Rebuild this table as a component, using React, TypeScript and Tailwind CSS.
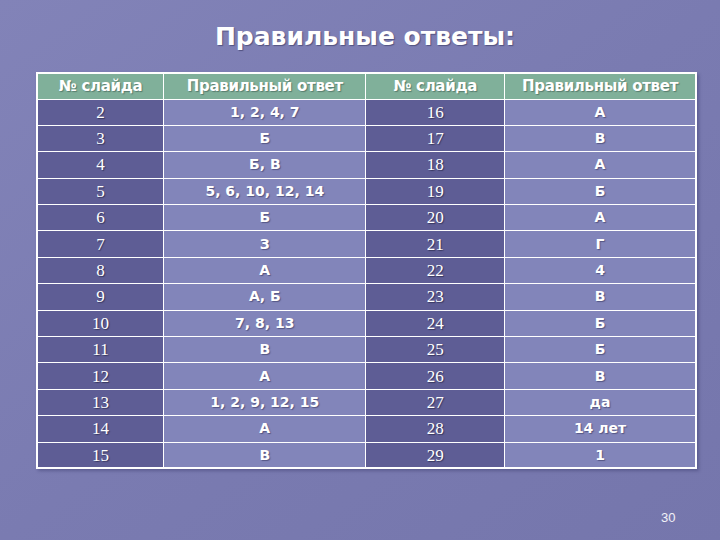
import React from 'react'

const rows: [string, string, string, string][] = [
  ['2', '1, 2, 4, 7', '16', 'А'],
  ['3', 'Б', '17', 'В'],
  ['4', 'Б, В', '18', 'А'],
  ['5', '5, 6, 10, 12, 14', '19', 'Б'],
  ['6', 'Б', '20', 'А'],
  ['7', 'З', '21', 'Г'],
  ['8', 'А', '22', '4'],
  ['9', 'А, Б', '23', 'В'],
  ['10', '7, 8, 13', '24', 'Б'],
  ['11', 'В', '25', 'Б'],
  ['12', 'А', '26', 'В'],
  ['13', '1, 2, 9, 12, 15', '27', 'да'],
  ['14', 'А', '28', '14 лет'],
  ['15', 'В', '29', '1'],
]

const sans = "font-['DejaVu_Sans','Noto_Sans',sans-serif]"
const serif = "font-['Liberation_Serif','DejaVu_Serif',serif]"

export default function App() {
  return (
    <div className="relative w-[720px] h-[540px] overflow-hidden bg-[#7c7db3] bg-gradient-to-br from-[#8283b8] via-[#7a7bb1] to-[#7576ac] text-white">
      {/* заголовок */}
      <h1 className={`${sans} pt-[22px] pl-[10px] text-center text-[25px] font-bold leading-[30px] [text-shadow:1px_1px_1px_rgba(40,40,80,0.5)]`}>
        Правильные ответы:
      </h1>

      {/* таблица */}
      <table className="ml-[36px] mt-[20px] w-[661px] border-collapse border-2 border-white shadow-[2px_2px_3px_rgba(40,40,90,0.35)]">
        <colgroup>
          <col className="w-[127px]" />
          <col className="w-[203px]" />
          <col className="w-[139px]" />
          <col className="w-[192px]" />
        </colgroup>
        <thead>
          <tr className="h-[26px] bg-[#80b09a]">
            {['№ слайда', 'Правильный ответ', '№ слайда', 'Правильный ответ'].map((h, i) => (
              <th
                key={i}
                className={`${sans} border-[1.5px] border-white p-0 text-center text-[15px] font-bold tracking-[-0.3px] [text-shadow:1px_1px_1px_rgba(60,90,80,0.6)]`}
              >
                {h}
              </th>
            ))}
          </tr>
        </thead>
        <tbody>
          {rows.map((r, i) => (
            <tr key={i} className="h-[26.4px]">
              <td className={`${serif} border-[1.5px] border-white bg-[#5e5d95] p-0 text-center text-[17px] leading-none [text-shadow:1px_1px_1px_rgba(30,30,60,0.6)]`}>
                {r[0]}
              </td>
              <td className={`${sans} border-[1.5px] border-white bg-[#8285ba] p-0 text-center text-[14px] font-bold [text-shadow:1px_1px_1px_rgba(40,40,80,0.5)]`}>
                {r[1]}
              </td>
              <td className={`${serif} border-[1.5px] border-white bg-[#5e5d95] p-0 text-center text-[17px] leading-none [text-shadow:1px_1px_1px_rgba(30,30,60,0.6)]`}>
                {r[2]}
              </td>
              <td className={`${sans} border-[1.5px] border-white bg-[#8285ba] p-0 text-center text-[14px] font-bold [text-shadow:1px_1px_1px_rgba(40,40,80,0.5)]`}>
                {r[3]}
              </td>
            </tr>
          ))}
        </tbody>
      </table>

      {/* номер слайда */}
      <div className="absolute left-[661px] top-[508px] font-['Liberation_Sans',sans-serif] text-[13px] text-white/90">
        30
      </div>
    </div>
  )
}
